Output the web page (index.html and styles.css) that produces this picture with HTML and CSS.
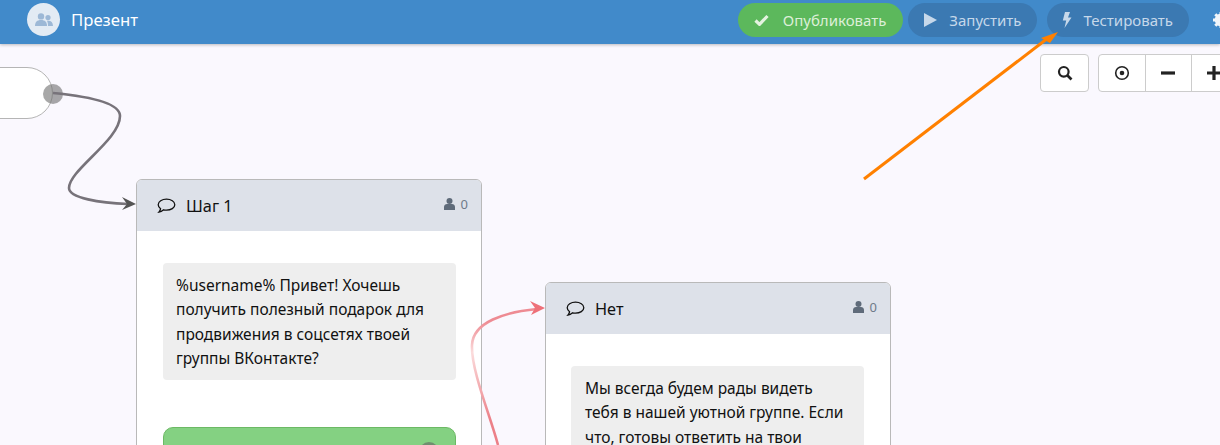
FILE: index.html
```html
<!DOCTYPE html>
<html lang="en">
<head>
    <meta charset="UTF-8">
    <title>Презент</title>
    <link rel="stylesheet" href="styles.css">
</head>
<body>
    <header class="topbar">
        <div class="brand">
            <span class="avatar">
                <svg width="18" height="14" viewBox="0 0 18 14"><circle cx="6" cy="3.4" r="3.2" fill="#9db8d6"/><circle cx="13" cy="4.6" r="2.6" fill="#9db8d6"/><path d="M0 13c0-4 2-6 6-6s6 2 6 6z" fill="#9db8d6"/><path d="M12 7.8c3.6-.6 6 1.2 6 5.2h-5c0-2-.2-3.600-1-5.200z" fill="#9db8d6"/></svg>
            </span>
            <span class="brand-name">Презент</span>
        </div>
        <nav class="actions">
            <a class="pill pill-green">
                <svg width="15" height="12" viewBox="0 0 15 12"><path d="M1.500 6.500l4 3.800L13.500 2" fill="none" stroke="#e4f3e0" stroke-width="3.200"/></svg>
                Опубликовать
            </a>
            <a class="pill">
                <svg width="14" height="14" viewBox="0 0 14 14"><path d="M1 0l13 7-13 7z" fill="#c6d8ea"/></svg>
                Запустить
            </a>
            <a class="pill pill-test">
                <svg width="10" height="16" viewBox="0 0 10 16"><path d="M3 0h5L6 5.500h3.500L2.500 16l1.700-7.500H.8z" fill="#c6d8ea"/></svg>
                Тестировать
            </a>
            <svg class="gear" width="16" height="16" viewBox="0 0 16 16"><circle cx="8" cy="8" r="4.500" fill="none" stroke="#f0f5fa" stroke-width="3.500"/><path d="M8 0v16M0 8h16M2.300 2.300l11.400 11.400M13.700 2.300L2.300 13.700" stroke="#f0f5fa" stroke-width="3"/></svg>
        </nav>
    </header>

    <main class="canvas">
        <div class="toolbar">
            <button class="tool-single">
                <svg width="16" height="16" viewBox="0 0 16 16"><circle cx="6.800" cy="6.800" r="4.800" fill="none" stroke="#222" stroke-width="2.200"/><path d="M10.500 10.500l4 4" stroke="#222" stroke-width="2.600"/></svg>
            </button>
            <div class="tool-group">
                <button class="tool">
                    <svg width="16" height="16" viewBox="0 0 16 16"><circle cx="8" cy="8" r="6.300" fill="none" stroke="#222" stroke-width="1.600"/><circle cx="8" cy="8" r="2.300" fill="#222"/></svg>
                </button>
                <button class="tool">
                    <svg width="14" height="14" viewBox="0 0 14 14"><path d="M0 7h14" stroke="#222" stroke-width="3.200"/></svg>
                </button>
                <button class="tool">
                    <svg width="14" height="14" viewBox="0 0 14 14"><path d="M0 7h14M7 0v14" stroke="#222" stroke-width="3.200"/></svg>
                </button>
            </div>
        </div>

        <div class="start-node"></div>
        <span class="start-dot"></span>

        <section class="card card-first">
            <div class="card-head">
                <svg class="bubble" width="19" height="16" viewBox="0 0 19 16"><path d="M9.500 1.200c4.500 0 8.300 2.400 8.300 5.500s-3.800 5.500-8.300 5.500c-1 0-2-.1-2.900-.4-1.200 1-2.800 2-4.700 2.300.8-.9 1.500-2 1.700-3.400C2 9.400 1.200 8.100 1.200 6.700c0-3.100 3.800-5.500 8.300-5.500z" fill="none" stroke="#111" stroke-width="1.300"/></svg>
                <span class="card-title">Шаг 1</span>
                <span class="card-count">
                    <svg width="11" height="12" viewBox="0 0 11 12"><circle cx="5.500" cy="3" r="3" fill="#5f6b7a"/><path d="M0 12V9c0-2 1.500-3 3-3h5c1.500 0 3 1 3 3v3z" fill="#5f6b7a"/></svg>
                    0
                </span>
            </div>
            <div class="card-body">
                <p class="message">%username% Привет! Хочешь получить полезный подарок для продвижения в соцсетях твоей группы ВКонтакте?</p>
                <div class="reply-green"><span class="reply-dot"></span></div>
            </div>
        </section>

        <section class="card card-second">
            <div class="card-head">
                <svg class="bubble" width="19" height="16" viewBox="0 0 19 16"><path d="M9.500 1.200c4.500 0 8.300 2.400 8.300 5.500s-3.800 5.500-8.300 5.500c-1 0-2-.1-2.900-.4-1.200 1-2.800 2-4.700 2.300.8-.9 1.500-2 1.700-3.400C2 9.400 1.200 8.100 1.200 6.700c0-3.100 3.800-5.500 8.300-5.500z" fill="none" stroke="#111" stroke-width="1.300"/></svg>
                <span class="card-title">Нет</span>
                <span class="card-count">
                    <svg width="11" height="12" viewBox="0 0 11 12"><circle cx="5.500" cy="3" r="3" fill="#5f6b7a"/><path d="M0 12V9c0-2 1.500-3 3-3h5c1.500 0 3 1 3 3v3z" fill="#5f6b7a"/></svg>
                    0
                </span>
            </div>
            <div class="card-body">
                <p class="message">Мы всегда будем рады видеть<br>тебя в нашей уютной группе. Если<br>что, готовы ответить на твои</p>
            </div>
        </section>

        <svg class="wires" width="1220" height="401" viewBox="0 44 1220 401">
            <defs>
                <linearGradient id="fade" gradientUnits="userSpaceOnUse" x1="480" y1="322" x2="490" y2="420">
                    <stop offset="0" stop-color="#ee8b93"/>
                    <stop offset="0.3" stop-color="#fbdcdc"/>
                    <stop offset="1" stop-color="#ec8088"/>
                </linearGradient>
            </defs>
            <path d="M53 93C85 96 120 102 120 116C120 140 69 170 69 188C69 198 100 203 128 204" fill="none" stroke="#77737a" stroke-width="2.600"/>
            <path d="M136 204l-14-7 5 7-5 6z" fill="#555"/>
            <path d="M498 445C490 415 471 370 472 345C473 322 505 312 537 309" fill="none" stroke="url(#fade)" stroke-width="2.600"/>
            <path d="M545 308l-15-7 5 7-4 7z" fill="#ee7079"/>
        </svg>
    </main>

    <svg class="annotation" width="1220" height="445" viewBox="0 0 1220 445">
        <path d="M864 179L1048 38" fill="none" stroke="#ff8000" stroke-width="3"/>
        <path d="M1058 32l-17 6 9 5z" fill="#ff8000"/>
    </svg>
</body>
</html>
```

FILE: styles.css
```css
* {
    box-sizing: border-box;
    margin: 0;
    padding: 0;
}

body {
    position: relative;
    width: 1220px;
    height: 445px;
    overflow: hidden;
    background: #faf8fe;
    font-family: "Noto Sans", sans-serif;
    color: #111;
}

.topbar {
    height: 44px;
    display: flex;
    align-items: center;
    justify-content: space-between;
    padding: 0 0 5px 27px;
    background: #418aca;
    box-shadow: 0 1px 3px rgba(0, 0, 0, 0.25);
}

.brand {
    display: flex;
    align-items: center;
    gap: 11px;
}

.avatar {
    width: 33px;
    height: 33px;
    border-radius: 50%;
    display: flex;
    align-items: center;
    justify-content: center;
    background: #e3ebf4;
}

.brand-name {
    color: #fff;
    font-size: 16.700px;
}

.actions {
    display: flex;
    align-items: center;
    gap: 5px;
    margin-right: -9px;
}

.pill {
    height: 34px;
    display: flex;
    align-items: center;
    gap: 12px;
    padding: 0 16px 0 15px;
    border-radius: 17px;
    background: #3b79b2;
    color: #c6d8ea;
    font-size: 15px;
}

.pill-green {
    gap: 14px;
    padding: 0 17px 0 16px;
    background: #5cb85c;
    color: #dcefd8;
}

.pill-test {
    gap: 11px;
    margin-left: 5px;
}

.gear {
    margin-left: 19px;
}

.canvas {
    position: relative;
    height: 401px;
    overflow: hidden;
}

.toolbar {
    position: absolute;
    top: 10px;
    left: 1040px;
    display: flex;
    gap: 9px;
    z-index: 2;
}

.tool-group {
    display: flex;
    width: 140px;
    border: 1px solid #ccc;
    border-radius: 4px;
    background: #fff;
}

.tool {
    width: 47px;
    height: 36px;
    display: flex;
    align-items: center;
    justify-content: center;
    border: 0;
    background: none;
    border-left: 1px solid #ccc;
}

.tool:first-child {
    border-left: 0;
}

.tool-single {
    width: 49px;
    height: 38px;
    display: flex;
    align-items: center;
    justify-content: center;
    border: 1px solid #ccc;
    border-radius: 4px;
    background: #fff;
}

.start-node {
    position: absolute;
    left: -60px;
    top: 23px;
    width: 113px;
    height: 52px;
    border: 1px solid #b5b5b5;
    border-radius: 26px;
    background: #fff;
}

.start-dot {
    position: absolute;
    left: 43px;
    top: 40px;
    width: 20px;
    height: 20px;
    border-radius: 50%;
    background: rgba(110, 110, 110, 0.6);
}

.card {
    position: absolute;
    width: 346px;
    border: 1px solid #b9b9b9;
    border-radius: 6px;
    background: #fff;
    overflow: hidden;
}

.card-first {
    left: 136px;
    top: 135px;
}

.card-second {
    left: 545px;
    top: 238px;
}

.card-head {
    height: 51px;
    display: flex;
    align-items: center;
    padding: 0 13px 0 20px;
    background: #dde1e9;
}

.bubble {
    margin-right: 10px;
}

.card-title {
    font-size: 16.300px;
}

.card-count {
    margin-left: auto;
    margin-top: -4px;
    display: flex;
    align-items: center;
    gap: 6px;
    font-size: 13px;
    color: #6f7b8a;
}

.card-body {
    padding: 32px 25px 40px 26px;
}

.card-second .card-body {
    padding: 32px 26px 40px 25px;
}

.card-second .message {
    padding-left: 14px;
}

.message {
    padding: 10px 13px;
    border-radius: 4px;
    background: #eee;
    font-size: 15.500px;
    line-height: 24.300px;
}

.reply-green {
    position: relative;
    height: 60px;
    margin-top: 47px;
    border: 1px solid #6cb964;
    border-radius: 10px;
    background: #84d182;
}

.reply-dot {
    position: absolute;
    right: 16px;
    top: 14px;
    width: 20px;
    height: 20px;
    border-radius: 50%;
    background: #6f8f6f;
}

.wires {
    position: absolute;
    left: 0;
    top: 0;
    pointer-events: none;
}

.annotation {
    position: absolute;
    left: 0;
    top: 0;
    pointer-events: none;
}
```
